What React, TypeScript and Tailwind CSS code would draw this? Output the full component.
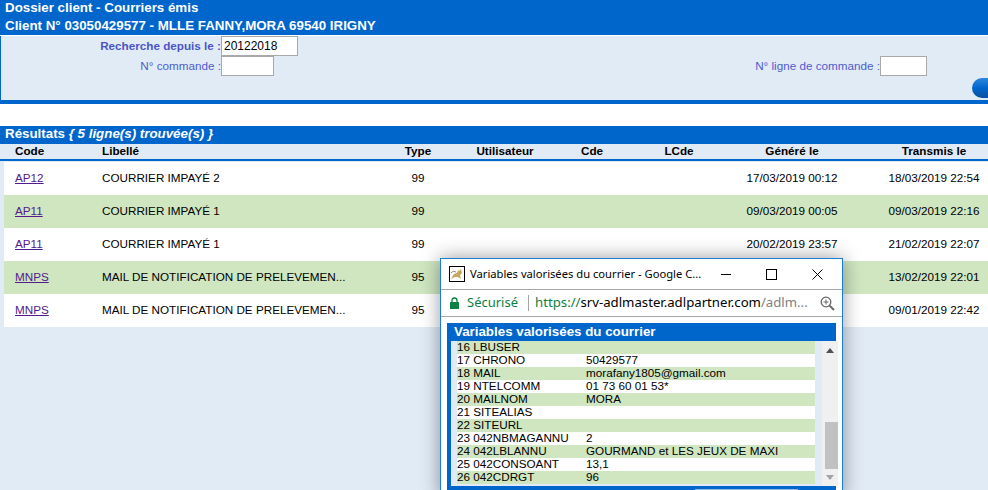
const arial = "font-['Liberation_Sans',Arial,sans-serif]";

const results = [
  { code: "AP12", label: "COURRIER IMPAYÉ 2", type: "99", made: "17/03/2019 00:12", sent: "18/03/2019 22:54" },
  { code: "AP11", label: "COURRIER IMPAYÉ 1", type: "99", made: "09/03/2019 00:05", sent: "09/03/2019 22:16" },
  { code: "AP11", label: "COURRIER IMPAYÉ 1", type: "99", made: "20/02/2019 23:57", sent: "21/02/2019 22:07" },
  { code: "MNPS", label: "MAIL DE NOTIFICATION DE PRELEVEMEN...", type: "95", made: "", sent: "13/02/2019 22:01" },
  { code: "MNPS", label: "MAIL DE NOTIFICATION DE PRELEVEMEN...", type: "95", made: "", sent: "09/01/2019 22:42" },
];

const variables = [
  ["16", "LBUSER", ""],
  ["17", "CHRONO", "50429577"],
  ["18", "MAIL", "morafany1805@gmail.com"],
  ["19", "NTELCOMM", "01 73 60 01 53*"],
  ["20", "MAILNOM", "MORA"],
  ["21", "SITEALIAS", ""],
  ["22", "SITEURL", ""],
  ["23", "042NBMAGANNU", "2"],
  ["24", "042LBLANNU", "GOURMAND et LES JEUX DE MAXI"],
  ["25", "042CONSOANT", "13,1"],
  ["26", "042CDRGT", "96"],
];

const cols = "grid grid-cols-[98px_291px_50px_124px_50px_124px_102px_145px] items-center";

function Popup() {
  return (
    <div className="absolute left-[440px] top-[258px] w-[403px] h-[240px] bg-white border border-[#1a7fd4] shadow-[0_0_18px_rgba(0,0,0,0.4)]">
      {/* title bar */}
      <div className="h-[30px] flex items-center border-b border-[#a6a6a6] box-content">
        <svg width="16" height="16" viewBox="0 0 16 16" className="ml-[8px] mr-[5px] shrink-0">
          <rect x="0.5" y="0.5" width="15" height="15" fill="#fff" stroke="#000" />
          <path d="M2 13 L5 8 L8 7 L9 4 L10 5 L12 3 L13 7 L11 9 L12 13 L9 11 L6 11 Z" fill="#c9a45c" />
          <path d="M2 7 Q4 4 7 6" stroke="#888" fill="none" />
        </svg>
        <span className="font-['Noto_Sans',sans-serif] text-[11.2px] text-black whitespace-nowrap w-[251px]">
          Variables valorisées du courrier - Google C...
        </span>
        <svg width="10" height="10" viewBox="0 0 10 10" className="shrink-0" stroke="#000" fill="none">
          <path d="M0 5.5 H10" />
        </svg>
        <svg width="11" height="11" viewBox="0 0 11 11" className="ml-[35px] shrink-0" stroke="#000" fill="none">
          <rect x="0.5" y="0.5" width="10" height="10" />
        </svg>
        <svg width="11" height="11" viewBox="0 0 11 11" className="ml-[35px] shrink-0" stroke="#000" fill="none">
          <path d="M0.5 0.5 L10.5 10.5 M10.5 0.5 L0.5 10.5" />
        </svg>
      </div>
      {/* address bar */}
      <div className="h-[26px] flex items-center border-b border-[#a6a6a6] box-content">
        <svg width="9" height="12" viewBox="0 0 9 12" className="ml-[9px] shrink-0">
          <rect x="0" y="5" width="9" height="7" rx="0.5" fill="#0b8043" />
          <path d="M2 5.5 V3.5 a2.5 2.5 0 0 1 5 0 V5.5" stroke="#0b8043" strokeWidth="1.3" fill="none" />
        </svg>
        <span className="ml-[8px] font-['Noto_Sans',sans-serif] text-[13px] text-[#0b8043]">Sécurisé</span>
        <span className="ml-[10px] w-px h-[16px] bg-[#a6a6a6]" />
        <span className="ml-[6px] w-[285px] font-['Noto_Sans',sans-serif] text-[13.2px] whitespace-nowrap text-[#0b8043]">
          https://<span className="text-black">srv-adlmaster.adlpartner.com</span>
          <span className="text-[#808080]">/adlm...</span>
        </span>
        <svg width="15" height="15" viewBox="0 0 15 15" className="shrink-0" fill="none" stroke="#666">
          <circle cx="6" cy="6" r="4.8" strokeWidth="1.3" />
          <path d="M6 3.5 V8.5 M3.5 6 H8.5" strokeWidth="1" />
          <path d="M9.6 9.6 L14 14" strokeWidth="2" />
        </svg>
      </div>
      {/* popup body */}
      <div className={`mx-[6px] mt-[6px] ${arial}`}>
        <div className="h-[18px] bg-[#0066cc] text-white font-bold text-[13.33px] leading-[17px] pl-[7px]">
          Variables valorisées du courrier
        </div>
        <div className="bg-[#e1ebf6] border-l-[4px] border-[#0066cc] flex pl-[6px] h-[145px]">
          <div className="w-[358px] shrink-0 text-[11.7px] leading-[12px] text-black">
            {variables.map(([n, name, value], i) => (
              <div key={n} className={`flex h-[13px] ${i % 2 === 0 ? "bg-[#cfe6c1]" : "bg-white"}`}>
                <span className="w-[129px] whitespace-nowrap">
                  {n} {name}
                </span>
                <span className="whitespace-nowrap">{value}</span>
              </div>
            ))}
          </div>
          <div className="ml-[7px] w-[16px] shrink-0 bg-[#f0f0f0] flex flex-col items-center">
            <svg width="8" height="5" viewBox="0 0 8 5" className="mt-[7px] shrink-0">
              <path d="M4 0 L8 5 H0 Z" fill="#505050" />
            </svg>
            <div className="mt-[69px] ml-[2px] w-[13px] h-[47px] bg-[#c1c1c1] shrink-0" />
            <svg width="8" height="5" viewBox="0 0 8 5" className="mt-[6px] shrink-0">
              <path d="M4 5 L8 0 H0 Z" fill="#a3a3a3" />
            </svg>
          </div>
        </div>
        <div className="h-[4px] bg-[#0066cc] pt-[3px] pl-[248px]">
          <div className="w-[103px] h-px bg-[#8fb8e4]" />
        </div>
      </div>
    </div>
  );
}

export default function App() {
  return (
    <div className={`relative w-[988px] h-[490px] overflow-hidden bg-[#e1ebf6] ${arial} text-[11.7px] text-black`}>
      <div className="bg-white">
        {/* dossier header */}
        <div className="h-[35px] bg-[#0066cc] text-white font-bold text-[13.33px] pl-[5px]">
          <div className="h-[16px] leading-[15px]">Dossier client - Courriers émis</div>
          <div className="leading-[19px]">Client N° 03050429577 - MLLE FANNY,MORA 69540 IRIGNY</div>
        </div>
        {/* search form */}
        <div className="h-[68px] bg-[#e1ebf6] border-l border-b-[4px] border-[#0066cc] text-[#4f5ccc]">
          <div className="flex items-center h-[20px] mt-px">
            <div className="w-[220px] text-right font-bold text-[#4c55c6] whitespace-nowrap">Recherche depuis le :</div>
            <input
              readOnly
              value="20122018"
              className="w-[77px] h-[20px] bg-white border border-[#a9a9a9] px-[2px] text-[12px] text-black"
            />
          </div>
          <div className="flex items-center h-[20px]">
            <div className="w-[220px] text-right">N° commande :</div>
            <input readOnly className="w-[53px] h-[20px] bg-white border border-[#a9a9a9]" />
            <div className="w-[606px] text-right">N° ligne de commande :</div>
            <input readOnly className="w-[47px] h-[20px] bg-white border border-[#a9a9a9]" />
          </div>
          <div className="flex justify-end mt-[2px]">
            <div className="w-[16px] h-[20px] rounded-l-full bg-gradient-to-b from-[#2a86dc] via-[#0066cc] to-[#0a4f9e]" />
          </div>
        </div>
        <div className="h-[22px]" />
        {/* results */}
        <div className="h-[18px] bg-[#0066cc] text-white text-[13.33px] leading-[16px] pl-[5px] font-bold">
          Résultats <i>{"{ 5 ligne(s) trouvée(s) }"}</i>
        </div>
      </div>
      <div className={`${cols} pl-[4px] h-[15px] pb-[1px] font-bold leading-[14px]`}>
        <div className="pl-[11px]">Code</div>
        <div>Libellé</div>
        <div className="text-center">Type</div>
        <div className="text-center">Utilisateur</div>
        <div className="text-center">Cde</div>
        <div className="text-center">LCde</div>
        <div className="text-center">Généré le</div>
        <div className="text-center pl-[37px]">Transmis le</div>
      </div>
      <div className="h-[2px] bg-[#0066cc]" />
      <div className="mt-px pl-[4px]">
        {results.map((r, i) => (
          <div key={i} className={`${cols} h-[33px] pb-[2px] ${i % 2 === 1 ? "bg-[#cfe6c1]" : "bg-white"}`}>
            <a href="#" className="pl-[11px] text-[#551a8b] underline">{r.code}</a>
            <div className="whitespace-nowrap">{r.label}</div>
            <div className="text-center">{r.type}</div>
            <div />
            <div />
            <div />
            <div className="text-center whitespace-nowrap">{r.made}</div>
            <div className="text-center pl-[37px] whitespace-nowrap">{r.sent}</div>
          </div>
        ))}
      </div>
      <Popup />
    </div>
  );
}
